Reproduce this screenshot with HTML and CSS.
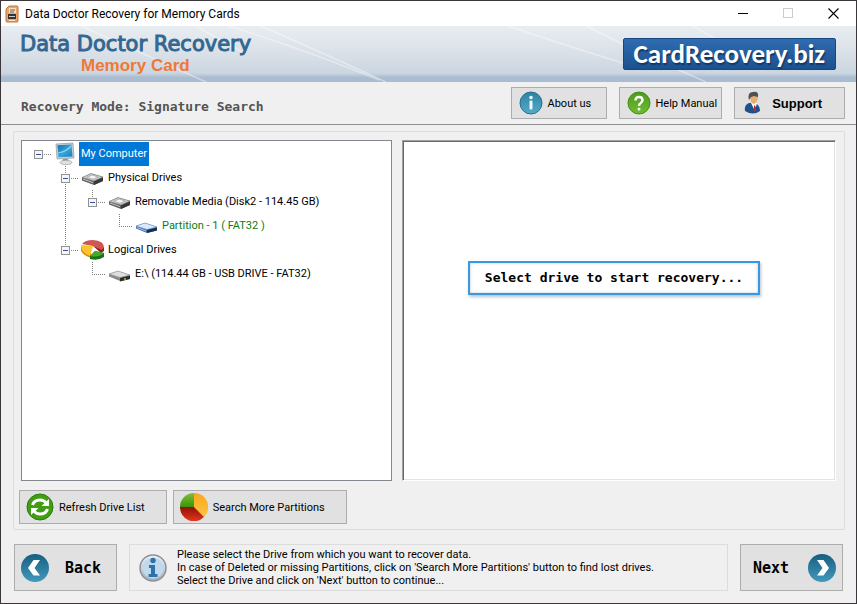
FILE: index.html
```html
<!DOCTYPE html>
<html lang="en">
<head>
    <meta charset="UTF-8">
    <meta name="viewport" content="width=device-width, initial-scale=1.0">
    <title>Data Doctor Recovery for Memory Cards</title>
    <link rel="stylesheet" href="styles.css">
</head>
<body>
    <!-- shared icons -->
    <svg class="defs" width="0" height="0" aria-hidden="true">
        <defs>
            <linearGradient id="blueDisc" x1="0" y1="0" x2="0" y2="1">
                <stop offset="0" stop-color="#155f80"/>
                <stop offset="1" stop-color="#4398bd"/>
            </linearGradient>
            <linearGradient id="lightDisc" x1="0" y1="0" x2="0" y2="1">
                <stop offset="0" stop-color="#2b83a4"/>
                <stop offset="1" stop-color="#55abc9"/>
            </linearGradient>
            <linearGradient id="greenDisc" x1="0" y1="0" x2="0" y2="1">
                <stop offset="0" stop-color="#4f9a1c"/>
                <stop offset="1" stop-color="#70bd32"/>
            </linearGradient>
            <linearGradient id="silver" x1="0" y1="0" x2="0" y2="1">
                <stop offset="0" stop-color="#f2f5f8"/>
                <stop offset="1" stop-color="#a3acb5"/>
            </linearGradient>
            <linearGradient id="screen" x1="0" y1="0" x2="1" y2="1">
                <stop offset="0" stop-color="#0f6db4"/>
                <stop offset="0.55" stop-color="#35a5dc"/>
                <stop offset="1" stop-color="#1579bd"/>
            </linearGradient>
            <linearGradient id="pieRed" x1="0" y1="0" x2="0" y2="1">
                <stop offset="0" stop-color="#8f1206"/>
                <stop offset="1" stop-color="#e5361d"/>
            </linearGradient>
            <linearGradient id="pieYellow" x1="0" y1="0" x2="0" y2="1">
                <stop offset="0" stop-color="#f9a81c"/>
                <stop offset="1" stop-color="#fbc444"/>
            </linearGradient>
            <linearGradient id="pieGreen" x1="0" y1="0" x2="0" y2="1">
                <stop offset="0" stop-color="#7fbf35"/>
                <stop offset="1" stop-color="#3b9409"/>
            </linearGradient>
        </defs>
        <symbol id="line" viewBox="0 0 27 24">
            <path class="dots" d="M13.5 0V24"/>
        </symbol>
        <symbol id="elbow" viewBox="0 0 27 24">
            <path class="dots" d="M13.5 0V13M13 12.5H27"/>
        </symbol>
        <symbol id="box" viewBox="0 0 27 24">
            <path class="dots" d="M19 12.5H27"/>
            <rect x="9.5" y="8.5" width="8" height="8" fill="#f6f6f8" stroke="#919191"/>
            <path d="M11 12.5H16" stroke="#3c4fa0"/>
        </symbol>
        <symbol id="drive" viewBox="0 0 27 24">
            <path d="M3 11.500L12 7.500 24 11 24 15 15 19 3 14.500Z" fill="#5e5e5e"/>
            <path d="M3 11.500L12 7.500 24 11 15 15Z" fill="#c9c9c9" stroke="#808080" stroke-width=".6"/>
            <path d="M8 11.400L13 9 19 11 14 13.200Z" fill="#f5f5f5" stroke="#999" stroke-width=".6"/>
            <path d="M15 15.500L24 11.500V15L15 19Z" fill="#383838"/>
            <path d="M4 13L14 16.600" stroke="#e3e3e3" stroke-width=".8"/>
        </symbol>
    </svg>

    <div class="window">
        <header class="titlebar">
            <svg class="app-icon" viewBox="0 0 14 18" aria-hidden="true">
                <path d="M1 4L4 1H12Q13 1 13 2V16Q13 17 12 17H2Q1 17 1 16Z" fill="#eda466" stroke="#b9763f"/>
                <rect x="4" y="3" width="7" height="5" fill="#f6dfc4"/>
                <path d="M5 5H10M5 7H9" stroke="#765b40"/>
                <rect x="3" y="9" width="8" height="5" fill="#343434"/>
                <path d="M4 11.500H10" stroke="#ccc"/>
                <path d="M4 15.500H10" stroke="#ffe2bd"/>
            </svg>
            <h1 class="window-title">Data Doctor Recovery for Memory Cards</h1>
            <div class="window-buttons">
                <button type="button" aria-label="Minimize"><svg viewBox="0 0 11 11"><path d="M0 5.500H10" stroke="#000"/></svg></button>
                <button type="button" aria-label="Maximize" disabled><svg viewBox="0 0 11 11"><rect x=".5" y=".5" width="9" height="9" fill="none" stroke="#ccc"/></svg></button>
                <button type="button" aria-label="Close"><svg viewBox="0 0 11 11"><path d="M.5 .5L10.500 10.500M10.500 .5L.5 10.500" stroke="#000" stroke-width="1.100"/></svg></button>
            </div>
        </header>

        <div class="banner">
            <svg class="swoosh" viewBox="0 0 855 56" preserveAspectRatio="none" aria-hidden="true">
                <g fill="none" stroke="#fff" stroke-opacity=".4" stroke-width="1.500">
                    <path d="M80 0Q130 22 205 56"/>
                    <path d="M195 0L245 28"/>
                    <path d="M228 0Q310 26 378 54"/>
                    <path d="M260 0Q320 26 385 56"/>
                    <path d="M508 0Q560 18 625 38"/>
                    <path d="M585 0Q650 32 705 56"/>
                    <path d="M692 0L720 16"/>
                </g>
            </svg>
            <div class="brand">
                <div class="brand-name">Data Doctor Recovery</div>
                <div class="brand-product">Memory Card</div>
            </div>
            <a class="site-link" href="#">CardRecovery.biz</a>
        </div>

        <div class="toolbar">
            <div class="mode">Recovery Mode: Signature Search</div>
            <div class="toolbar-buttons">
                <button type="button" class="btn">
                    <svg class="icon-tool" viewBox="0 0 24 24" aria-hidden="true">
                        <circle cx="12" cy="12" r="11" fill="url(#lightDisc)" stroke="#286f8b"/>
                        <rect x="10.500" y="9.500" width="3" height="9" rx="1" fill="#eefaff"/>
                        <circle cx="12" cy="6.500" r="1.800" fill="#eefaff"/>
                    </svg>
                    About us
                </button>
                <button type="button" class="btn">
                    <svg class="icon-tool" viewBox="0 0 24 24" aria-hidden="true">
                        <circle cx="12" cy="12" r="11" fill="url(#greenDisc)" stroke="#458b18"/>
                        <path d="M8.500 9.500Q8.500 6 12 6T15.500 9.200Q15.500 11 13.500 12.200 12 13 12 15" fill="none" stroke="#fff" stroke-width="2.400"/>
                        <circle cx="12" cy="18" r="1.500" fill="#fff"/>
                    </svg>
                    Help Manual
                </button>
                <button type="button" class="btn btn-support">
                    <svg class="icon-tool" viewBox="0 0 24 24" aria-hidden="true">
                        <path d="M3 20Q2 14 7 12L13 12Q18 14 18 20 11 25 3 20Z" fill="#1c538d"/>
                        <path d="M9 12L13 20 15 12Z" fill="#fff"/>
                        <path d="M12 14L14 16 14 21 12 19Z" fill="#c9231b"/>
                        <path d="M8 5Q8 12 12 13 16 11 16 5Z" fill="#e8ad73"/>
                        <path d="M7 9Q5 1 11 1 17 0 16 6L12 5 9 6Z" fill="#4c5358"/>
                    </svg>
                    Support
                </button>
            </div>
        </div>

        <main class="group">
            <div class="panels">
                <ul class="tree" role="tree">
                    <li class="node" role="treeitem" aria-selected="true">
                        <button type="button" class="toggle" aria-label="Collapse My Computer"><svg class="cell"><use href="#box"/></svg></button>
                        <svg class="cell" viewBox="0 0 27 24" aria-hidden="true">
                            <path d="M4 2L21 1 22 16 5 17Z" fill="#c8d0d4" stroke="#8c979d" stroke-width=".7"/>
                            <path d="M5.500 3.300L19.500 2.500 20.500 14.500 6.500 15.300Z" fill="url(#screen)"/>
                            <path d="M6 11Q14 10 19 4" fill="none" stroke="#8cd5f1" stroke-width="1.200"/>
                            <path d="M11 17H16L17 20H10Z" fill="#8f989d"/>
                            <ellipse cx="14" cy="20.500" rx="6" ry="2.200" fill="#dce0e2" stroke="#9ba2a5" stroke-width=".7"/>
                        </svg>
                        <span class="label selected">My Computer</span>
                    </li>
                    <li class="node" role="treeitem">
                        <span class="cell"></span>
                        <button type="button" class="toggle" aria-label="Collapse Physical Drives"><svg class="cell"><use href="#line"/><use href="#box"/></svg></button>
                        <svg class="cell" aria-hidden="true"><use href="#drive"/></svg>
                        <span class="label">Physical Drives</span>
                    </li>
                    <li class="node" role="treeitem">
                        <span class="cell"></span>
                        <svg class="cell" aria-hidden="true"><use href="#line"/></svg>
                        <button type="button" class="toggle" aria-label="Collapse Removable Media"><svg class="cell"><use href="#elbow"/><use href="#box"/></svg></button>
                        <svg class="cell" aria-hidden="true"><use href="#drive"/></svg>
                        <span class="label">Removable Media (Disk2 - 114.45 GB)</span>
                    </li>
                    <li class="node" role="treeitem">
                        <span class="cell"></span>
                        <svg class="cell" aria-hidden="true"><use href="#line"/></svg>
                        <span class="cell"></span>
                        <svg class="cell" aria-hidden="true"><use href="#elbow"/></svg>
                        <svg class="cell" viewBox="0 0 27 24" aria-hidden="true">
                            <path d="M3 12L12 9 24 13V16.500L14 19 3 14.500Z" fill="#416db0"/>
                            <path d="M3 12L12 9 24 13 14 15.500Z" fill="#dce9fa" stroke="#7298cc" stroke-width=".7"/>
                            <path d="M14 16L24 13.500V16.500L14 19Z" fill="#1d2e4c"/>
                            <path d="M4 13.500L13 17" stroke="#a8c7ee"/>
                        </svg>
                        <span class="label partition">Partition - 1 ( FAT32 )</span>
                    </li>
                    <li class="node" role="treeitem">
                        <span class="cell"></span>
                        <button type="button" class="toggle" aria-label="Collapse Logical Drives"><svg class="cell"><use href="#elbow"/><use href="#box"/></svg></button>
                        <svg class="cell" viewBox="0 0 27 24" aria-hidden="true">
                            <path d="M2 8V13Q5 18 12 20V13Z" fill="#d68b10"/>
                            <path d="M14 8L2 7Q1 14 11 18Z" fill="#ffc32c"/>
                            <path d="M14 8L22 15 25 13V9L22 10Z" fill="#8e2020"/>
                            <path d="M14 8L3 6Q6 2 14 2 25 3 25 9L23 12Z" fill="#cf5654"/>
                            <path d="M16 13L25 15V19Q19 23 11 21V18Z" fill="#1c7118"/>
                            <path d="M16 13L25 15Q20 20 11 18Z" fill="#46a82c"/>
                        </svg>
                        <span class="label">Logical Drives</span>
                    </li>
                    <li class="node" role="treeitem">
                        <span class="cell"></span>
                        <span class="cell"></span>
                        <svg class="cell" aria-hidden="true"><use href="#elbow"/></svg>
                        <svg class="cell" viewBox="0 0 27 24" aria-hidden="true">
                            <path d="M3 12L12 9 24 13V17L14 19 3 14.500Z" fill="#8a8a8a"/>
                            <path d="M3 12L12 9 24 13 14 15.500Z" fill="#dedede" stroke="#9b9b9b" stroke-width=".7"/>
                            <path d="M14 16L24 13.500V17L14 19.500Z" fill="#2d2d2d"/>
                            <path d="M18 17H20" stroke="#7ed33e" stroke-width="1.500"/>
                        </svg>
                        <span class="label">E:\ (114.44 GB - USB DRIVE - FAT32)</span>
                    </li>
                </ul>

                <section class="preview">
                    <p class="hint">Select drive to start recovery...</p>
                </section>
            </div>

            <div class="group-buttons">
                <button type="button" class="btn">
                    <svg class="icon-big" viewBox="0 0 28 28" aria-hidden="true">
                        <circle cx="14" cy="14" r="13" fill="#3f9e14" stroke="#2c7c0c"/>
                        <g fill="none" stroke="#fff" stroke-width="3">
                            <path d="M6.500 12Q8 7 14 7 18 7 20 10"/>
                            <path d="M21.500 16Q20 21 14 21 10 21 8 18"/>
                        </g>
                        <path d="M23 6V13H15.500Z" fill="#fff"/>
                        <path d="M5 22V15H12.500Z" fill="#fff"/>
                    </svg>
                    Refresh Drive List
                </button>
                <button type="button" class="btn">
                    <svg class="icon-big" viewBox="0 0 28 28" aria-hidden="true">
                        <path d="M14 14V0A14 14 0 0 1 24 24Z" fill="url(#pieYellow)"/>
                        <path d="M14 14L24 24A14 14 0 0 1 0 14Z" fill="url(#pieRed)"/>
                        <path d="M14 14H0A14 14 0 0 1 14 0Z" fill="url(#pieGreen)"/>
                    </svg>
                    Search More Partitions
                </button>
            </div>
        </main>

        <footer class="footer">
            <button type="button" class="btn btn-nav">
                <svg class="icon-big" viewBox="0 0 28 28" aria-hidden="true">
                    <circle cx="14" cy="14" r="14" fill="url(#blueDisc)"/>
                    <path d="M12.500 6H19L13.500 14 19 21.500H12.500L7 14Z" fill="#fff"/>
                </svg>
                Back
            </button>
            <div class="info">
                <svg class="icon-big" viewBox="0 0 28 28" aria-hidden="true">
                    <circle cx="14" cy="14" r="13" fill="url(#silver)" stroke="#89929a" stroke-width="1.500"/>
                    <circle cx="14" cy="14" r="10.500" fill="#c0d9ec"/>
                    <circle cx="14" cy="6.500" r="2.700" fill="#2d72ad"/>
                    <path d="M10 11H16V20H18.500V23H9.500V20H12V14H10Z" fill="#2d72ad"/>
                </svg>
                <p class="info-text">
                    Please select the Drive from which you want to recover data.<br>
                    In case of Deleted or missing Partitions, click on 'Search More Partitions' button to find lost drives.<br>
                    Select the Drive and click on 'Next' button to continue...
                </p>
            </div>
            <button type="button" class="btn btn-nav btn-next">
                Next
                <svg class="icon-big" viewBox="0 0 28 28" aria-hidden="true">
                    <circle cx="14" cy="14" r="14" fill="url(#blueDisc)"/>
                    <path d="M15.500 6H9L14.500 14 9 21.500H15.500L21 14Z" fill="#fff"/>
                </svg>
            </button>
        </footer>
    </div>
</body>
</html>
```

FILE: styles.css
```css
* {
    margin: 0;
    padding: 0;
    box-sizing: border-box;
}

body {
    font-family: Tahoma, Roboto, "Noto Sans", sans-serif;
    font-size: 11px;
    color: #000;
    background: #f0f0f0;
}

svg {
    display: block;
    flex: none;
}

.defs {
    position: absolute;
}

button {
    font: inherit;
    color: inherit;
}

.window {
    min-height: 100vh;
    display: flex;
    flex-direction: column;
    border: 1px solid #3a363a;
}

/* title bar */
.titlebar {
    height: 25px;
    display: flex;
    align-items: center;
    padding-left: 4px;
    background: #fff;
}

.app-icon {
    width: 14px;
    height: 18px;
}

.window-title {
    flex: 1;
    padding-left: 6px;
    font-family: "Segoe UI", Roboto, sans-serif;
    font-size: 12px;
    font-weight: 400;
}

.window-buttons {
    display: flex;
}

.window-buttons button {
    width: 45px;
    height: 24px;
    display: flex;
    align-items: center;
    justify-content: center;
    border: none;
    background: none;
}

.window-buttons svg {
    width: 11px;
    height: 11px;
}

/* banner */
.banner {
    position: relative;
    height: 56px;
    display: flex;
    align-items: center;
    justify-content: space-between;
    padding: 0 20px 0 19px;
    background: linear-gradient(#e8edf1 0%, #d9e0e7 50%, #cbd6e1 84%, #a9bcd1 92%, #a9bcd1 100%);
}

.swoosh {
    position: absolute;
    inset: 0;
    width: 100%;
    height: 100%;
}

.brand {
    position: relative;
}

.brand-name {
    font-family: Verdana, "DejaVu Sans", sans-serif;
    font-size: 21px;
    line-height: 24px;
    color: #336791;
    -webkit-text-stroke: 1px #336791;
}

.brand-product {
    padding-left: 61px;
    font-family: Arial, "Liberation Sans", sans-serif;
    font-size: 17px;
    font-weight: 700;
    line-height: 20px;
    color: #ef7836;
}

.site-link {
    position: relative;
    padding: 0 10px;
    border: 1px solid #174780;
    border-radius: 2px;
    background: linear-gradient(#2f6cb0, #1b5190);
    font-family: Calibri, "Noto Sans", sans-serif;
    font-size: 27px;
    font-weight: 600;
    line-height: 30px;
    color: #fff;
    text-decoration: none;
    text-shadow: 1px 2px 1px #123a68;
}

/* buttons */
.btn {
    display: flex;
    align-items: center;
    border: 1px solid #adadad;
    background: #e1e1e1;
    white-space: nowrap;
}

.icon-tool {
    width: 24px;
    height: 24px;
}

.icon-big {
    width: 28px;
    height: 28px;
}

/* toolbar */
.toolbar {
    height: 43px;
    display: flex;
    align-items: center;
    justify-content: space-between;
    padding: 0 11px 0 20px;
    border-bottom: 1px solid #8e8e8e;
}

.mode {
    padding-top: 6px;
    font-family: Consolas, "DejaVu Sans Mono", monospace;
    font-size: 13px;
    font-weight: 700;
    color: #545454;
}

.toolbar-buttons {
    display: flex;
    gap: 12px;
}

.toolbar-buttons .btn {
    height: 32px;
    min-width: 96px;
    padding: 0 4px 0 7px;
    gap: 5px;
}

.toolbar-buttons .btn-support {
    padding-right: 22px;
    gap: 6px;
    font-family: Arial, "Liberation Sans", sans-serif;
    font-size: 13px;
    font-weight: 700;
}

/* main group */
.group {
    flex: 1;
    display: flex;
    flex-direction: column;
    gap: 9px;
    margin: 6px 11px 0 12px;
    padding: 8px 8px 5px 7px;
    border: 1px solid #dcdcdc;
    border-radius: 2px;
}

.panels {
    flex: 1;
    display: grid;
    grid-template-columns: 371fr 434fr;
    gap: 10px;
}

.tree {
    padding: 1px 3px;
    border: 1px solid #828790;
    background: #fff;
    list-style: none;
}

.node {
    height: 24px;
    display: flex;
}

.cell {
    flex: none;
    width: 27px;
    height: 24px;
}

.dots {
    fill: none;
    stroke: #808080;
    stroke-dasharray: 1 1;
    shape-rendering: crispEdges;
}

.toggle {
    border: none;
    background: none;
}

.label {
    padding: 0 2px;
    line-height: 24px;
    white-space: nowrap;
}

.label.selected {
    background: #0078d7;
    color: #fff;
}

.label.partition {
    color: #0a7d14;
}

.preview {
    display: flex;
    align-items: flex-start;
    justify-content: center;
    padding: 120px 10px 0 0;
    border: 1px solid;
    border-color: #a0a0a0 #fff #fff #a0a0a0;
    box-shadow: inset 1px 1px #696969, inset -1px -1px #e3e3e3;
    background: #fff;
}

.hint {
    padding: 0 15px;
    border: 2px solid #3b97de;
    box-shadow: 1px 2px 3px #b5c4d2, inset 0 0 3px #b5c4d2;
    font-family: Consolas, "DejaVu Sans Mono", monospace;
    font-size: 13px;
    font-weight: 700;
    line-height: 30px;
}

.group-buttons {
    display: flex;
    gap: 6px;
    margin-left: -2px;
}

.group-buttons .btn {
    height: 34px;
    padding: 0 21px 0 6px;
    gap: 5px;
}

/* footer */
.footer {
    display: flex;
    gap: 12px;
    padding: 14px 13px 12px;
}

.btn-nav {
    width: 103px;
    padding: 0 6px;
    gap: 16px;
    font-family: "Lucida Console", "DejaVu Sans Mono", monospace;
    font-size: 15px;
    font-weight: 700;
}

.btn-next {
    padding-left: 12px;
    justify-content: space-between;
}

.info {
    flex: 1;
    display: flex;
    align-items: center;
    gap: 10px;
    padding: 3px 9px;
    border: 1px solid #dcdcdc;
}

.info-text {
    line-height: 13px;
}
```
